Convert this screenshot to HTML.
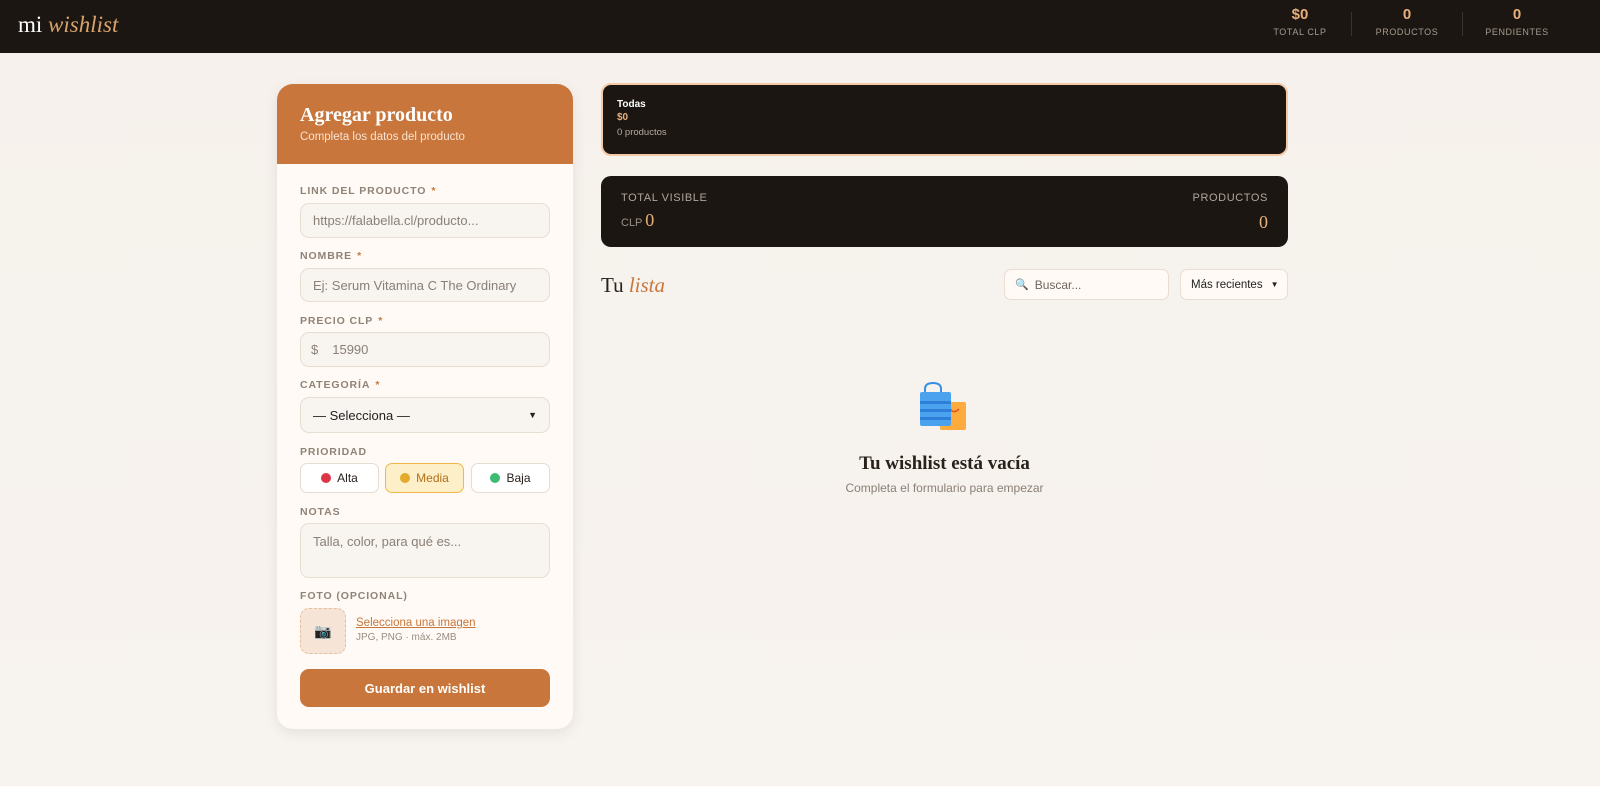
<!DOCTYPE html>
<html><head><meta charset="utf-8"><style>
*{box-sizing:border-box;margin:0;padding:0}
body{width:1600px;height:786px;overflow:hidden;background:linear-gradient(180deg,#f6f1ec,#f7f3ee);font-family:"Liberation Sans",sans-serif;color:#2a211b;position:relative}
.hd{position:absolute;left:0;top:0;width:1600px;height:53px;background:#1c1612}
.logo{position:absolute;left:18px;top:12px;font-family:"Liberation Serif",serif;font-size:23px;color:#fff}
.logo i{color:#d7a36b}
.st{position:absolute;top:6px;text-align:center;width:100px}
.st b{display:block;color:#e7b07a;font-size:15px}
.st span{display:block;color:#a59a8f;font-size:9px;letter-spacing:.6px;margin-top:4px}
.sep{position:absolute;top:12px;width:1px;height:24px;background:#3a322b}
.card{position:absolute;left:277px;top:84px;width:296px;height:645px;background:#fffaf5;border-radius:16px;box-shadow:0 4px 14px rgba(0,0,0,.08);overflow:hidden}
.ch{height:80px;background:#c8763c;padding:20px 23px}
.ch h2{font-family:"Liberation Serif",serif;font-size:20px;color:#fff;font-weight:bold}
.ch p{font-size:11.5px;color:#f8e2cf;margin-top:4px}
.lb{position:absolute;left:23px;font-size:10.5px;font-weight:bold;color:#8f8378;letter-spacing:.9px}
.lb em{color:#c8763c;font-style:normal;margin-left:5px}
.in{position:absolute;left:23px;width:250px;background:#f8f4ef;border:1px solid #e8ddd2;border-radius:9px;font-size:13px;color:#8a8077;padding:0 12px;display:flex;align-items:center}
.pb{position:absolute;top:379px;height:30px;width:79px;border:1px solid #e6dcd2;border-radius:7px;background:#fff;font-size:12px;display:flex;align-items:center;justify-content:center;gap:6px}
.dot{width:10px;height:10px;border-radius:50%}
.btn{position:absolute;left:23px;top:585px;width:250px;height:38px;background:#c8763c;border-radius:9px;color:#fff;font-weight:bold;font-size:13px;display:flex;align-items:center;justify-content:center}
.dk{position:absolute;left:601px;width:687px;background:#1c1612;border-radius:10px}
.small{font-size:10px}
</style></head><body>
<div class="hd">
<div class="logo">mi <i>wishlist</i></div>
<div class="st" style="left:1250px"><b>$0</b><span>TOTAL CLP</span></div>
<div class="sep" style="left:1351px"></div>
<div class="st" style="left:1357px"><b>0</b><span>PRODUCTOS</span></div>
<div class="sep" style="left:1462px"></div>
<div class="st" style="left:1467px"><b>0</b><span>PENDIENTES</span></div>
</div>

<div class="card">
<div class="ch"><h2>Agregar producto</h2><p>Completa los datos del producto</p></div>
<div class="lb" style="top:101px">LINK DEL PRODUCTO<em>*</em></div>
<div class="in" style="top:119px;height:35px">https://falabella.cl/producto...</div>
<div class="lb" style="top:166px">NOMBRE<em>*</em></div>
<div class="in" style="top:184px;height:34px">Ej: Serum Vitamina C The Ordinary</div>
<div class="lb" style="top:231px">PRECIO CLP<em>*</em></div>
<div class="in" style="top:248px;height:35px;padding-left:10px"><span style="margin-right:14px">$</span>15990</div>
<div class="lb" style="top:295px">CATEGORÍA<em>*</em></div>
<div class="in" style="top:313px;height:36px;color:#222;font-size:13px;justify-content:space-between">— Selecciona —<span style="font-size:9px">&#9660;</span></div>
<div class="lb" style="top:362px">PRIORIDAD</div>
<div class="pb" style="left:23px"><span class="dot" style="background:#dc3545"></span>Alta</div>
<div class="pb" style="left:108px;background:#fdf0c9;border-color:#f0b84a;color:#b46d18"><span class="dot" style="background:#e3aa2c"></span>Media</div>
<div class="pb" style="left:194px"><span class="dot" style="background:#3dbb72"></span>Baja</div>
<div class="lb" style="top:422px">NOTAS</div>
<div class="in" style="top:439px;height:55px;align-items:flex-start;padding-top:10px">Talla, color, para qué es...</div>
<div class="lb" style="top:506px">FOTO (OPCIONAL)</div>
<div style="position:absolute;left:23px;top:524px;width:46px;height:46px;border:1.5px dashed #e3c0a0;border-radius:9px;background:#f6e5d6;display:flex;align-items:center;justify-content:center;font-size:14px;color:#555">📷</div>
<div style="position:absolute;left:79px;top:533px;font-size:11.5px;color:#c8763c;text-decoration:underline">Selecciona una imagen</div>
<div style="position:absolute;left:79px;top:548px;font-size:10px;color:#988d83">JPG, PNG · máx. 2MB</div>
<div class="btn">Guardar en wishlist</div>
</div>

<div class="dk" style="top:83px;height:73px;border:2px solid #f3c9a7;padding:14px 14px">
<div class="small" style="color:#fff;font-weight:bold">Todas</div>
<div class="small" style="color:#e7b07a;font-weight:bold;margin-top:2px">$0</div>
<div style="font-size:9.5px;color:#b5aaa0;margin-top:4px">0 productos</div>
</div>
<div class="dk" style="top:176px;height:71px;padding:16px 20px">
<div style="font-size:11px;color:#b0a59b;letter-spacing:.6px">TOTAL VISIBLE</div>
<div style="position:absolute;right:20px;top:16px;font-size:11px;color:#b0a59b;letter-spacing:.6px">PRODUCTOS</div>
<div style="margin-top:6px;font-size:11px;color:#9b9188">CLP <span style="font-family:'Liberation Serif',serif;font-size:18px;color:#e7b07a">0</span></div>
<div style="position:absolute;right:20px;top:36px;font-family:'Liberation Serif',serif;font-size:18px;color:#e7b07a">0</div>
</div>

<div style="position:absolute;left:601px;top:273px;font-family:'Liberation Serif',serif;font-size:21px">Tu <i style="color:#c8763c">lista</i></div>
<div style="position:absolute;left:1004px;top:269px;width:165px;height:31px;background:#fffaf5;border:1px solid #e8ddd2;border-radius:7px;font-size:12px;color:#6e655d;display:flex;align-items:center;padding-left:10px"><span style="font-size:11px;margin-right:6px">🔍</span>Buscar...</div>
<div style="position:absolute;left:1180px;top:269px;width:108px;height:31px;background:#fffaf5;border:1px solid #e8ddd2;border-radius:7px;font-size:11.5px;color:#222;display:flex;align-items:center;padding-left:10px">Más recientes <span style="font-size:8px;margin-left:8px">&#9660;</span></div>

<svg style="position:absolute;left:919px;top:382px" width="50" height="50" viewBox="0 0 50 50">
<rect x="21" y="20" width="26" height="28" rx="2" fill="#fdab3c"/>
<path d="M30 22 Q32 34 40 27" stroke="#e0522d" stroke-width="1.5" fill="none"/>
<path d="M6 12 V7 Q6 1 14 1 Q22 1 22 7 V12" stroke="#3590e6" stroke-width="2" fill="none"/>
<rect x="1" y="10" width="31" height="34" rx="2" fill="#4ba3f0"/>
<rect x="1" y="19" width="31" height="3" fill="#2d7fd8"/><rect x="1" y="27" width="31" height="3" fill="#2d7fd8"/><rect x="1" y="35" width="31" height="3" fill="#2d7fd8"/>
</svg>
<div style="position:absolute;left:601px;width:687px;top:453px;text-align:center;font-family:'Liberation Serif',serif;font-weight:bold;font-size:19px;color:#2a211b">Tu wishlist está vacía</div>
<div style="position:absolute;left:601px;width:687px;top:481px;text-align:center;font-size:12px;color:#8a8077">Completa el formulario para empezar</div>
</body></html>
